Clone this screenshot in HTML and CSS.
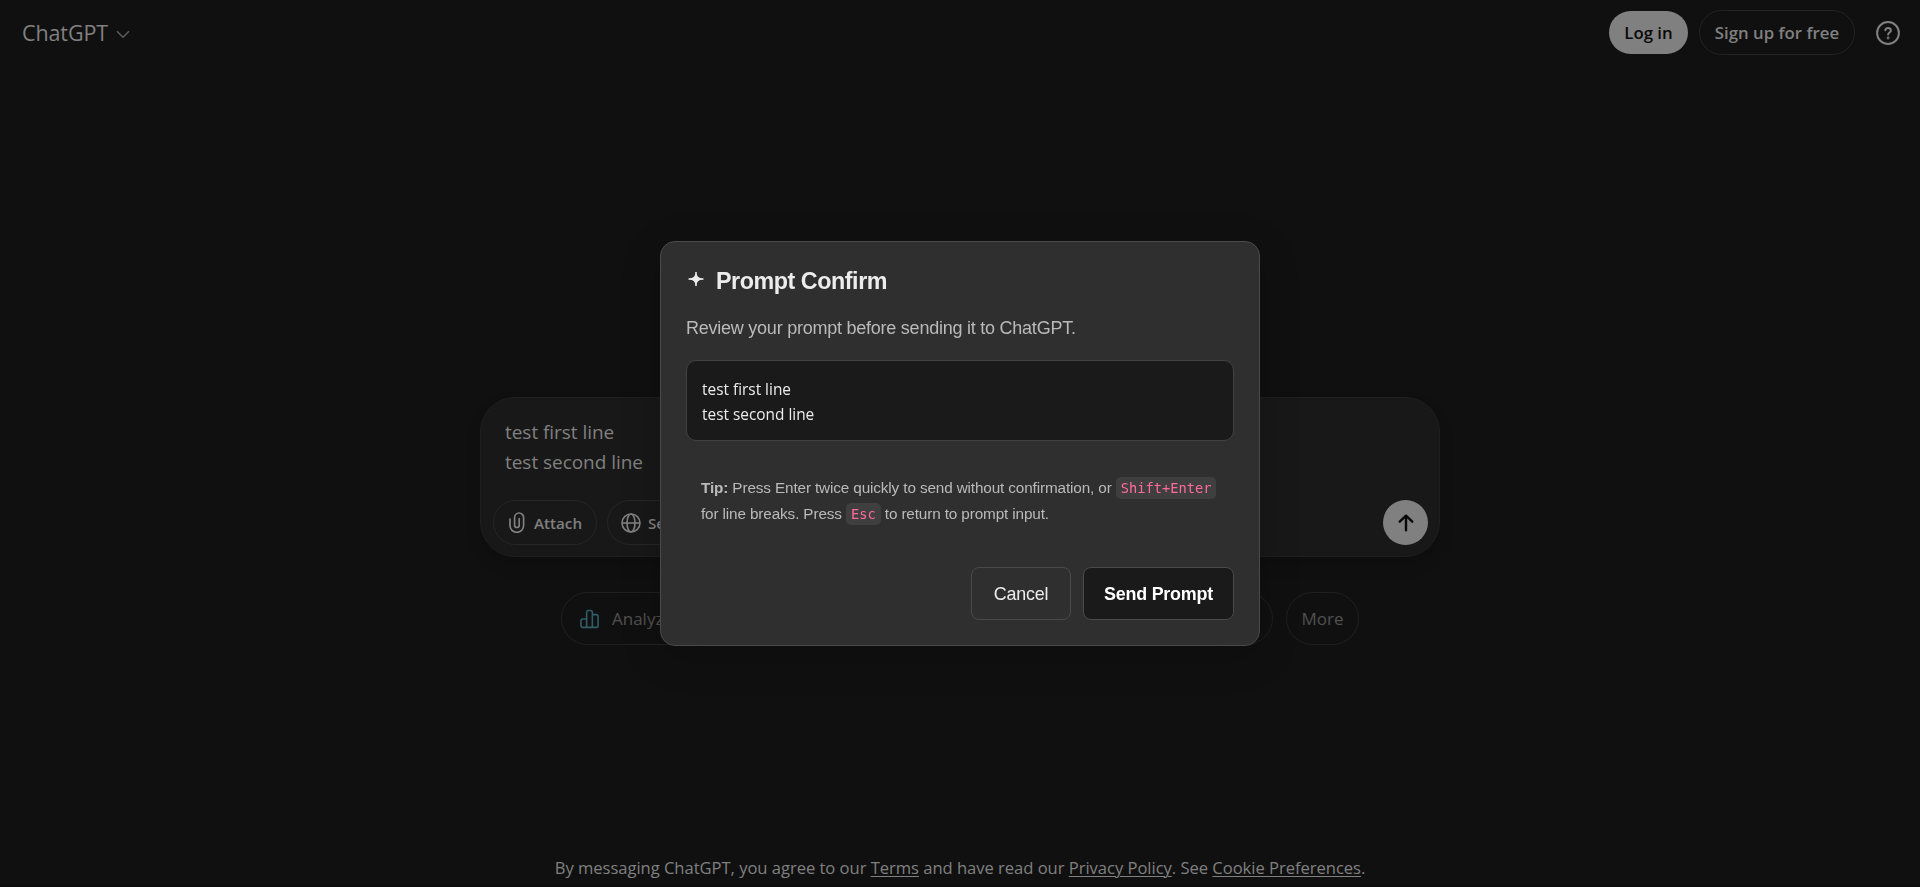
FILE: index.html
```html
<!DOCTYPE html>
<html lang="en">
<head>
<meta charset="utf-8">
<title>ChatGPT</title>
<link rel="stylesheet" href="styles.css">
</head>
<body>
<div class="page">
  <header class="header">
    <div class="brand"><span class="brand-name">ChatGPT</span>
      <svg class="chevron" viewBox="0 0 14 9" fill="none" stroke="currentColor" stroke-width="1.6"><path d="M1 1.200l6 6 6-6"/></svg>
    </div>
    <nav class="account">
      <button class="login">Log in</button>
      <button class="signup">Sign up for free</button>
      <svg class="help" viewBox="0 0 24 24" fill="none" stroke="currentColor" stroke-width="2" stroke-linecap="round"><circle cx="12" cy="12" r="10.900"/><path d="M9.300 9.300c.3-1.500 1.300-2.300 2.800-2.300 1.600 0 2.800 1 2.800 2.500 0 2-2.800 2.100-2.800 4.100"/><circle cx="12.100" cy="17" r=".4" fill="currentColor"/></svg>
    </nav>
  </header>
  <main class="main">
    <section class="composer">
      <div class="draft">test first line<br>test second line</div>
      <div class="tools">
        <button class="tool attach"><svg class="clip" viewBox="0 0 16 21" fill="none" stroke="currentColor" stroke-width="1.700" stroke-linecap="round"><path d="M1 7v6.500a6.800 6.800 0 0 0 13.600 0V5.500a4.500 4.500 0 0 0-9 0v7.700a2.300 2.300 0 0 0 4.600 0V6.500"/></svg><span>Attach</span></button>
        <button class="tool search"><svg class="globe" viewBox="0 0 20 20" fill="none" stroke="currentColor" stroke-width="1.600"><circle cx="10" cy="10" r="9"/><ellipse cx="10" cy="10" rx="4" ry="9"/><path d="M1 10h18"/></svg><span>Search</span></button>
        <button class="send" aria-label="Send"><svg viewBox="0 0 18 20" fill="none" stroke="currentColor" stroke-width="2.400" stroke-linecap="round" stroke-linejoin="round"><path d="M9 17.300V3M2.700 8.700L9 2.700l6.300 6"/></svg></button>
      </div>
    </section>
    <div class="chips">
      <button class="chip chip-analyze"><svg class="bars" viewBox="0 0 20 20" fill="none" stroke="currentColor" stroke-width="1.700" stroke-linejoin="round"><path d="M7 18.800H2.800a1.800 1.800 0 0 1-1.800-1.800v-5.200A1.800 1.800 0 0 1 2.800 10H7zM7 18.800V3.200A2.200 2.200 0 0 1 9.200 1h1.600A2.200 2.200 0 0 1 13 3.200v15.600zM13 5.400h4.200A1.800 1.800 0 0 1 19 7.200V17a1.800 1.800 0 0 1-1.800 1.800H13z"/></svg><span>Analyze images</span></button>
      <button class="chip chip-wide"></button>
      <button class="chip">More</button>
    </div>
  </main>
  <footer class="footer"><p class="legal">By messaging ChatGPT, you agree to our <a>Terms</a> and have read our <a>Privacy Policy</a>. See <a>Cookie Preferences</a>.</p></footer>
</div>
<div class="overlay">
  <section class="dialog" role="dialog">
    <h1 class="title"><svg class="spark" viewBox="0 0 16 16" fill="currentColor"><path d="M8 .5C8.900 5.200 9.600 6.700 15.800 8 9.600 9.300 8.900 10.800 8 15.500 7.100 10.800 6.400 9.300.2 8 6.400 6.700 7.100 5.200 8 .5z"/><path d="M7.300 1h1.400v14H7.300zM.6 7.300h14.800v1.400H.6z"/></svg>Prompt Confirm</h1>
    <p class="intro">Review your prompt before sending it to ChatGPT.</p>
    <div class="preview">test first line<br>test second line</div>
    <p class="tip"><b>Tip:</b> Press Enter twice quickly to send without confirmation, or <kbd>Shift+Enter</kbd> for line breaks. Press <kbd>Esc</kbd> to return to prompt input.</p>
    <div class="actions"><button class="btn cancel">Cancel</button><button class="btn confirm">Send Prompt</button></div>
  </section>
</div>
</body>
</html>
```
FILE: styles.css
```css
* { box-sizing: border-box; }
body { margin: 0; background: #101010; color: #808080; font-family: "Open Sans", "Noto Sans", sans-serif; overflow: hidden; }
button { font: inherit; color: inherit; background: none; border: 1px solid #232323; padding: 0; margin: 0; white-space: nowrap; }
svg { display: block; flex: none; }
p, h1 { margin: 0; }

.page { height: 887px; display: flex; flex-direction: column; }
.header { height: 65px; padding: 0 20px 0 22px; display: flex; align-items: center; justify-content: space-between; }
.brand { display: flex; align-items: center; gap: 8px; font-size: 21.5px; letter-spacing: -.1px; line-height: 30px; }
.chevron { width: 14px; height: 9px; margin-top: 3px; color: #5c5c5c; }
.account { display: flex; align-items: center; font-size: 16.8px; font-weight: 600; }
.login { width: 79px; height: 43px; border: 0; border-radius: 22px; background: #808080; color: #080808; }
.signup { width: 156px; height: 45px; border-radius: 23px; margin-left: 11px; }
.help { width: 24px; height: 24px; margin-left: 21px; }

.main { flex: 1; padding-top: 332px; display: flex; flex-direction: column; align-items: center; gap: 35px; }
.composer { width: 960px; height: 160px; padding: 19px 11px 11px 12px; border: 1px solid #1f1f1f; border-radius: 35px; background: #181818; display: flex; flex-direction: column; justify-content: space-between; box-shadow: 0 8px 15px rgba(0,0,0,.15); }
.draft { padding-left: 12px; font-size: 19px; letter-spacing: -.04px; line-height: 30px; }
.tools { display: flex; align-items: center; gap: 10px; }
.tool { height: 45px; border-radius: 23px; display: flex; align-items: center; gap: 9px; font-size: 15.2px; font-weight: 600; border-color: #262626; }
.tool span { padding-top: 1px; }
.attach { width: 104px; padding-left: 15px; }
.search { width: 108px; padding-left: 13px; gap: 7px; }
.clip { width: 16px; height: 21px; }
.globe { width: 20px; height: 20px; }
.send { width: 45px; height: 45px; margin-left: auto; border: 0; border-radius: 50%; background: #808080; color: #080808; display: flex; align-items: center; justify-content: center; }
.send svg { width: 18px; height: 20px; }
.chips { display: flex; gap: 13px; color: #505050; font-size: 17px; letter-spacing: -.1px; }
.chip { height: 53px; padding: 0 16px; border-radius: 27px; display: flex; align-items: center; gap: 13px; border-color: #202020; }
.chip:last-child { width: 73px; justify-content: center; padding: 0; }
.chip-analyze { width: 190px; padding-left: 18px; }
.chip-wide { width: 509px; }
.bars { width: 19px; height: 20px; color: #315d69; }
.footer { height: 44px; display: flex; justify-content: center; font-size: 16.6px; letter-spacing: -.04px; line-height: 24px; padding-top: 13px; border-bottom: 1px solid #0b090a; }
.legal a { text-decoration: underline; text-decoration-thickness: 1px; text-underline-offset: 2px; }

.overlay { position: fixed; inset: 0; display: flex; align-items: center; justify-content: center; font-family: "Liberation Sans", Arial, sans-serif; }
.dialog { width: 600px; height: 405px; padding: 23px 25px 25px; border: 1px solid #4a4a4a; border-radius: 15px; background: #2f2f2f; color: #bababa; display: flex; flex-direction: column; box-shadow: 0 10px 40px rgba(0,0,0,.2); }
.title { display: flex; align-items: center; gap: 12px; padding-left: 2px; font-size: 23.3px; letter-spacing: -.45px; line-height: 32px; color: #ececec; }
.spark { width: 16px; height: 16px; margin-top: -5px; }
.intro { margin-top: 18px; font-size: 18px; letter-spacing: -.24px; line-height: 26px; }
.preview { margin-top: 19px; height: 81px; padding: 16px 15px 14px; border: 1px solid #424242; border-radius: 10px; background: #1a1a1a; color: #ececec; font: 15.4px/25px "Open Sans", "Noto Sans", sans-serif; }
.tip { margin-top: 34px; padding: 0 15px; font-size: 15.3px; letter-spacing: -.13px; line-height: 26px; }
kbd { padding: 3px 5px; border-radius: 5px; background: #3f3f3f; color: #ff6b9d; font: 13.7px/17px "DejaVu Sans Mono", monospace; letter-spacing: 0; }
.actions { margin-top: auto; display: flex; justify-content: flex-end; gap: 12px; }
.btn { height: 53px; padding-top: 2px; border-color: #4a4a4a; border-radius: 8px; font-size: 17.9px; letter-spacing: -.22px; }
.cancel { width: 100px; color: #ececec; }
.confirm { width: 151px; background: #1a1a1a; color: #fff; font-weight: 700; }
```
